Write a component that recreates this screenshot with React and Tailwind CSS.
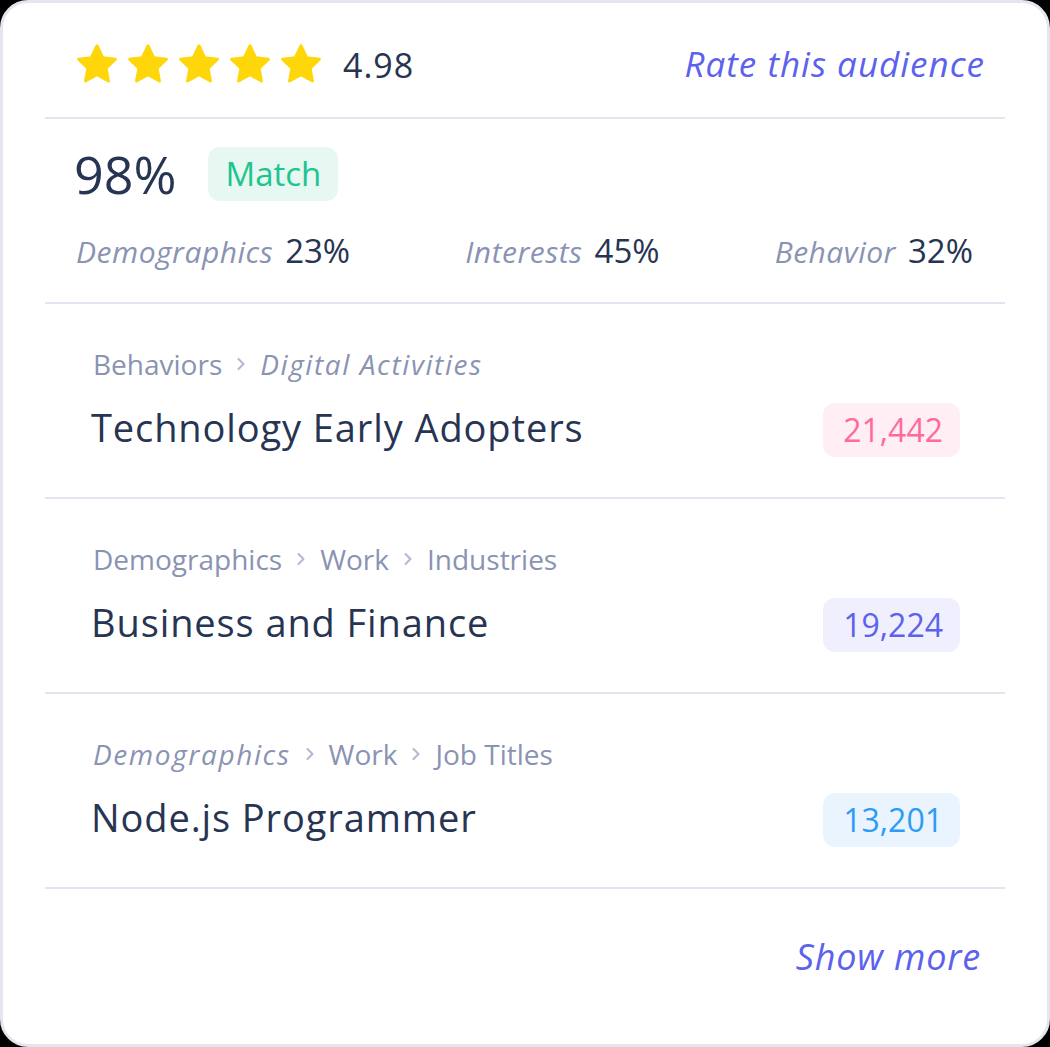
import { ChevronRight } from "lucide-react";

const rows = [
  {
    crumbs: [
      { text: "Behaviors" },
      { text: "Digital Activities", italic: true },
    ],
    title: "Technology Early Adopters",
    count: "21,442",
    badge: "bg-[#ffeef4] text-[#fe6b9b]",
  },
  {
    crumbs: [{ text: "Demographics" }, { text: "Work" }, { text: "Industries" }],
    title: "Business and Finance",
    count: "19,224",
    badge: "bg-[#efeffd] text-[#5d62ec]",
  },
  {
    crumbs: [
      { text: "Demographics", italic: true },
      { text: "Work" },
      { text: "Job Titles" },
    ],
    title: "Node.js Programmer",
    count: "13,201",
    badge: "bg-[#e9f4ff] text-[#2e9cf5]",
  },
];

const stats = [
  { label: "Demographics", value: "23%" },
  { label: "Interests", value: "45%" },
  { label: "Behavior", value: "32%" },
];

function Star() {
  return (
    <svg width="44" height="42" viewBox="0 0 24 23">
      <path
        d="M12 1.5l3.1 6.5 7 .9-5.1 4.9 1.3 7-6.3-3.4-6.3 3.4 1.3-7L1.9 8.9l7-.9z"
        fill="#ffd60a"
        stroke="#ffd60a"
        strokeWidth="1.6"
        strokeLinejoin="round"
      />
    </svg>
  );
}

export default function App() {
  return (
    <div
      className="w-[1050px] h-[1047px] bg-black"
      style={{ fontFamily: "'Open Sans', Lato, sans-serif" }}
    >
      <div className="h-full rounded-[28px] border-[3px] border-[#e3e5ef] bg-white px-[42px] flex flex-col">

        {/* Rating */}
        <div className="h-[116px] shrink-0 flex items-center justify-between pl-[30px] pr-[20px] pt-[8px] border-b-2 border-[#e3e5ef]">
          <div className="flex items-center">
            <div className="flex items-center gap-[7px]">
              <Star />
              <Star />
              <Star />
              <Star />
              <Star />
            </div>
            <span className="ml-[20px] mt-[2px] text-[34px] tracking-[1px] text-[#273452]">
              4.98
            </span>
          </div>
          <span className="text-[35px] italic tracking-[1px] text-[#5c62ec]">
            Rate this audience
          </span>
        </div>

        {/* Match */}
        <div className="h-[185px] shrink-0 flex flex-col pl-[31px] pr-[32px] pt-[28px] border-b-2 border-[#e3e5ef]">
          <div className="flex items-center gap-[32px]">
            <span className="text-[52px] leading-none text-[#273452] -ml-[2px]">98%</span>
            <span className="h-[54px] px-[17px] flex items-center rounded-[12px] bg-[#e6f8f1] text-[33px] text-[#20c48e]">
              Match
            </span>
          </div>
          <div className="mt-[25px] flex items-center justify-between">
            {stats.map((s) => (
              <div key={s.label} className="flex items-baseline gap-[12px]">
                <span className="text-[30px] italic tracking-[0.5px] text-[#8a93b3]">
                  {s.label}
                </span>
                <span className="text-[33px] text-[#273452]">{s.value}</span>
              </div>
            ))}
          </div>
        </div>

        {/* Rows */}
        {rows.map((r) => (
          <div
            key={r.title}
            className="h-[195px] shrink-0 flex items-start justify-between pl-[48px] pr-[45px] pt-[46px] border-b-2 border-[#e3e5ef]"
          >
            <div className="flex flex-col">
              <div className="flex items-center h-[28px] text-[28px] text-[#8a93b3] leading-none">
                {r.crumbs.map((c, i) => (
                  <div key={i} className="flex items-center">
                    {i > 0 && (
                      <ChevronRight
                        size={20}
                        strokeWidth={2.5}
                        className="mx-[9px] text-[#b3b9cf]"
                      />
                    )}
                    <span className={c.italic ? "italic tracking-[1.6px]" : ""}>
                      {c.text}
                    </span>
                  </div>
                ))}
              </div>
              <span className="mt-[30px] text-[38px] tracking-[0.9px] leading-none text-[#273452] -ml-[2px]">
                {r.title}
              </span>
            </div>
            <span
              className={`mt-[53px] h-[54px] pl-[20px] pr-[17px] flex items-center rounded-[12px] text-[32px] ${r.badge}`}
            >
              {r.count}
            </span>
          </div>
        ))}

        {/* Show more */}
        <div className="flex-1 flex items-center justify-end pr-[24px] pb-[20px]">
          <span className="text-[36px] italic tracking-[0.8px] text-[#5c62ec]">Show more</span>
        </div>
      </div>
    </div>
  );
}
